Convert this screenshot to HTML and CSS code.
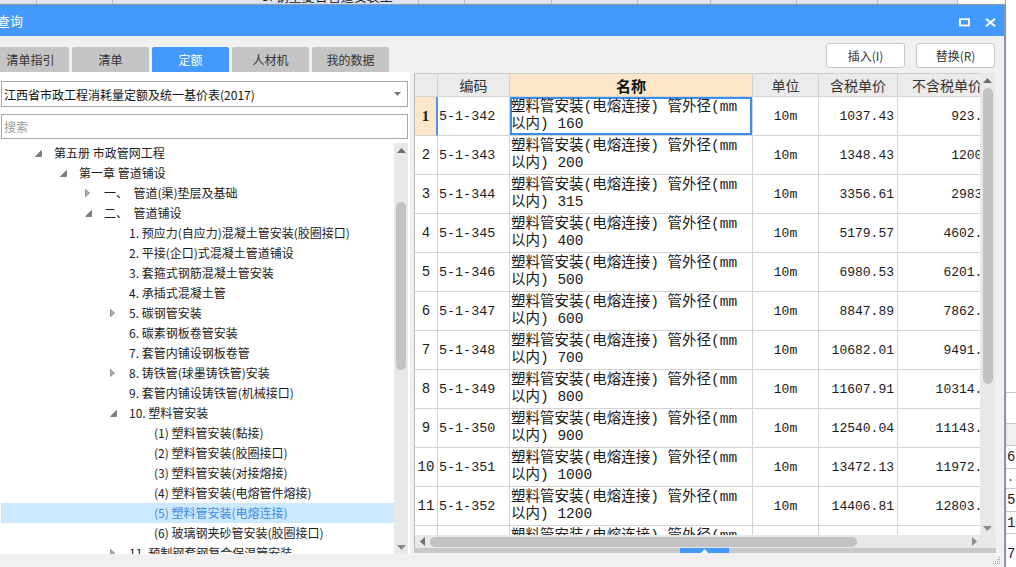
FILE: index.html
```html
<!DOCTYPE html>
<html lang="zh-CN">
<head>
<meta charset="utf-8">
<title>查询</title>
<link rel="stylesheet" href="styles.css">
</head>
<body>
<div class="screen">
  <div class="bg-top">
    <div class="bg-cell c1"></div>
    <div class="bg-cell c2"></div>
    <div class="bg-cell c3"><span class="bg-text">5. 钢塑复合管道安装工</span></div>
    <div class="bg-cell c4"></div>
    <div class="bg-cell c5"></div>
    <div class="bg-cell c6"></div>
    <div class="bg-cell c7"></div>
    <div class="bg-cell c8"></div>
    <div class="bg-cell c9"></div>
    <div class="bg-cell c10"></div>
  </div>

  <div class="bg-right">
    <div class="bgr-space"></div>
    <div class="bgr-row r1"></div>
    <div class="bgr-row r2 gray"></div>
    <div class="bgr-row r3">6</div>
    <div class="bgr-row r4">‥</div>
    <div class="bgr-row r3">5</div>
    <div class="bgr-row r5">1</div>
    <div class="bgr-row r6">7</div>
  </div>

  <div class="dialog">
    <div class="titlebar">
      <span class="title">查询</span>
      <div class="win-btns">
        <svg class="ico-max" width="11" height="9" viewBox="0 0 11 9"><rect x="1" y="1.2" width="9" height="6.3" fill="none" stroke="#fff" stroke-width="1.8"/></svg>
        <svg class="ico-close" width="11" height="9" viewBox="0 0 11 9"><path d="M1 0.8L10 8.2M10 0.8L1 8.2" stroke="#fff" stroke-width="2.1"/></svg>
      </div>
    </div>

    <div class="toolbar">
      <div class="tabs">
        <div class="tab">清单指引</div>
        <div class="tab">清单</div>
        <div class="tab active">定额</div>
        <div class="tab">人材机</div>
        <div class="tab">我的数据</div>
      </div>
      <div class="actions">
        <button class="btn">插入(I)</button>
        <button class="btn">替换(R)</button>
      </div>
    </div>

    <div class="main">
      <div class="left">
        <div class="select">
          <span>江西省市政工程消耗量定额及统一基价表(2017)</span>
          <svg class="sel-arrow" width="7" height="4" viewBox="0 0 7 4"><path d="M0 0H7L3.5 4Z" fill="#7a7a7a"/></svg>
        </div>
        <div class="search">搜索</div>
        <div class="tree-wrap">
          <div class="tree">
            <div class="tree-row l0"><span class="tog"><svg width="7" height="7" viewBox="0 0 7 7"><path d="M6.5 0.5V6.5H0.5Z" fill="#7c7c7c" stroke="#5a5a5a" stroke-width="0.6"/></svg></span>第五册 市政管网工程</div>
            <div class="tree-row l1"><span class="tog"><svg width="7" height="7" viewBox="0 0 7 7"><path d="M6.5 0.5V6.5H0.5Z" fill="#7c7c7c" stroke="#5a5a5a" stroke-width="0.6"/></svg></span>第一章 管道铺设</div>
            <div class="tree-row l2"><span class="tog"><svg width="5" height="8" viewBox="0 0 5 8"><path d="M0.5 0.5L4.5 4L0.5 7.5Z" fill="#b0b0b0" stroke="#808080" stroke-width="0.8"/></svg></span>一、  管道(渠)垫层及基础</div>
            <div class="tree-row l2"><span class="tog"><svg width="7" height="7" viewBox="0 0 7 7"><path d="M6.5 0.5V6.5H0.5Z" fill="#7c7c7c" stroke="#5a5a5a" stroke-width="0.6"/></svg></span>二、  管道铺设</div>
            <div class="tree-row l3"><span class="tog"></span>1. 预应力(自应力)混凝土管安装(胶圈接口)</div>
            <div class="tree-row l3"><span class="tog"></span>2. 平接(企口)式混凝土管道铺设</div>
            <div class="tree-row l3"><span class="tog"></span>3. 套箍式钢筋混凝土管安装</div>
            <div class="tree-row l3"><span class="tog"></span>4. 承插式混凝土管</div>
            <div class="tree-row l3"><span class="tog"><svg width="5" height="8" viewBox="0 0 5 8"><path d="M0.5 0.5L4.5 4L0.5 7.5Z" fill="#b0b0b0" stroke="#808080" stroke-width="0.8"/></svg></span>5. 碳钢管安装</div>
            <div class="tree-row l3"><span class="tog"></span>6. 碳素钢板卷管安装</div>
            <div class="tree-row l3"><span class="tog"></span>7. 套管内铺设钢板卷管</div>
            <div class="tree-row l3"><span class="tog"><svg width="5" height="8" viewBox="0 0 5 8"><path d="M0.5 0.5L4.5 4L0.5 7.5Z" fill="#b0b0b0" stroke="#808080" stroke-width="0.8"/></svg></span>8. 铸铁管(球墨铸铁管)安装</div>
            <div class="tree-row l3"><span class="tog"></span>9. 套管内铺设铸铁管(机械接口)</div>
            <div class="tree-row l3"><span class="tog"><svg width="7" height="7" viewBox="0 0 7 7"><path d="M6.5 0.5V6.5H0.5Z" fill="#7c7c7c" stroke="#5a5a5a" stroke-width="0.6"/></svg></span>10. 塑料管安装</div>
            <div class="tree-row l4"><span class="tog"></span>(1) 塑料管安装(黏接)</div>
            <div class="tree-row l4"><span class="tog"></span>(2) 塑料管安装(胶圈接口)</div>
            <div class="tree-row l4"><span class="tog"></span>(3) 塑料管安装(对接熔接)</div>
            <div class="tree-row l4"><span class="tog"></span>(4) 塑料管安装(电熔管件熔接)</div>
            <div class="tree-row l4 selected"><span class="tog"></span>(5) 塑料管安装(电熔连接)</div>
            <div class="tree-row l4"><span class="tog"></span>(6) 玻璃钢夹砂管安装(胶圈接口)</div>
            <div class="tree-row l3"><span class="tog"><svg width="5" height="8" viewBox="0 0 5 8"><path d="M0.5 0.5L4.5 4L0.5 7.5Z" fill="#b0b0b0" stroke="#808080" stroke-width="0.8"/></svg></span>11. 预制钢套钢复合保温管安装</div>
          </div>
          <div class="vscroll tree-vs">
            <div class="arrow-box"><svg width="9" height="5" viewBox="0 0 9 5"><path d="M0 5L4.5 0L9 5Z" fill="#6e6e6e"/></svg></div>
            <div class="thumb tree-thumb"></div>
            <div class="flex-space"></div>
            <div class="arrow-box"><svg width="9" height="5" viewBox="0 0 9 5"><path d="M0 0L4.5 5L9 0Z" fill="#8a8a8a"/></svg></div>
          </div>
        </div>
      </div>

      <div class="right">
        <div class="grid-body">
          <div class="grid-view">
            <div class="grow head">
              <div class="gc"></div>
              <div class="gc">编码</div>
              <div class="gc name-h">名称</div>
              <div class="gc">单位</div>
              <div class="gc">含税单价</div>
              <div class="gc">不含税单价</div>
            </div>
            <div class="grow">
              <div class="gc num cur">1</div>
              <div class="gc code">5-1-342</div>
              <div class="gc name sel"><span>塑料管安装(电熔连接) 管外径(mm</span><span>以内) 160</span></div>
              <div class="gc unit">10m</div>
              <div class="gc price">1037.43</div>
              <div class="gc price">923.35</div>
            </div>
            <div class="grow">
              <div class="gc num">2</div>
              <div class="gc code">5-1-343</div>
              <div class="gc name"><span>塑料管安装(电熔连接) 管外径(mm</span><span>以内) 200</span></div>
              <div class="gc unit">10m</div>
              <div class="gc price">1348.43</div>
              <div class="gc price">1200.1</div>
            </div>
            <div class="grow">
              <div class="gc num">3</div>
              <div class="gc code">5-1-344</div>
              <div class="gc name"><span>塑料管安装(电熔连接) 管外径(mm</span><span>以内) 315</span></div>
              <div class="gc unit">10m</div>
              <div class="gc price">3356.61</div>
              <div class="gc price">2983.3</div>
            </div>
            <div class="grow">
              <div class="gc num">4</div>
              <div class="gc code">5-1-345</div>
              <div class="gc name"><span>塑料管安装(电熔连接) 管外径(mm</span><span>以内) 400</span></div>
              <div class="gc unit">10m</div>
              <div class="gc price">5179.57</div>
              <div class="gc price">4602.57</div>
            </div>
            <div class="grow">
              <div class="gc num">5</div>
              <div class="gc code">5-1-346</div>
              <div class="gc name"><span>塑料管安装(电熔连接) 管外径(mm</span><span>以内) 500</span></div>
              <div class="gc unit">10m</div>
              <div class="gc price">6980.53</div>
              <div class="gc price">6201.96</div>
            </div>
            <div class="grow">
              <div class="gc num">6</div>
              <div class="gc code">5-1-347</div>
              <div class="gc name"><span>塑料管安装(电熔连接) 管外径(mm</span><span>以内) 600</span></div>
              <div class="gc unit">10m</div>
              <div class="gc price">8847.89</div>
              <div class="gc price">7862.15</div>
            </div>
            <div class="grow">
              <div class="gc num">7</div>
              <div class="gc code">5-1-348</div>
              <div class="gc name"><span>塑料管安装(电熔连接) 管外径(mm</span><span>以内) 700</span></div>
              <div class="gc unit">10m</div>
              <div class="gc price">10682.01</div>
              <div class="gc price">9491.38</div>
            </div>
            <div class="grow">
              <div class="gc num">8</div>
              <div class="gc code">5-1-349</div>
              <div class="gc name"><span>塑料管安装(电熔连接) 管外径(mm</span><span>以内) 800</span></div>
              <div class="gc unit">10m</div>
              <div class="gc price">11607.91</div>
              <div class="gc price">10314.22</div>
            </div>
            <div class="grow">
              <div class="gc num">9</div>
              <div class="gc code">5-1-350</div>
              <div class="gc name"><span>塑料管安装(电熔连接) 管外径(mm</span><span>以内) 900</span></div>
              <div class="gc unit">10m</div>
              <div class="gc price">12540.04</div>
              <div class="gc price">11143.07</div>
            </div>
            <div class="grow">
              <div class="gc num">10</div>
              <div class="gc code">5-1-351</div>
              <div class="gc name"><span>塑料管安装(电熔连接) 管外径(mm</span><span>以内) 1000</span></div>
              <div class="gc unit">10m</div>
              <div class="gc price">13472.13</div>
              <div class="gc price">11972.48</div>
            </div>
            <div class="grow">
              <div class="gc num">11</div>
              <div class="gc code">5-1-352</div>
              <div class="gc name"><span>塑料管安装(电熔连接) 管外径(mm</span><span>以内) 1200</span></div>
              <div class="gc unit">10m</div>
              <div class="gc price">14406.81</div>
              <div class="gc price">12803.66</div>
            </div>
            <div class="grow">
              <div class="gc num">12</div>
              <div class="gc code">5-1-353</div>
              <div class="gc name"><span>塑料管安装(电熔连接) 管外径(mm</span><span>以内) 1400</span></div>
              <div class="gc unit">10m</div>
              <div class="gc price">15338.92</div>
              <div class="gc price">13632.51</div>
            </div>
          </div>
          <div class="vscroll grid-vs">
            <div class="arrow-box"><svg width="9" height="5" viewBox="0 0 9 5"><path d="M0 5L4.5 0L9 5Z" fill="#6e6e6e"/></svg></div>
            <div class="thumb grid-thumb"></div>
            <div class="flex-space"></div>
            <div class="arrow-box"><svg width="9" height="5" viewBox="0 0 9 5"><path d="M0 0L4.5 5L9 0Z" fill="#8a8a8a"/></svg></div>
          </div>
        </div>
        <div class="hscroll">
          <div class="h-arrow"><svg width="5" height="9" viewBox="0 0 5 9"><path d="M5 0L0 4.5L5 9Z" fill="#6e6e6e"/></svg></div>
          <div class="thumb h-thumb"></div>
          <div class="flex-space"></div>
          <div class="h-arrow"><svg width="5" height="9" viewBox="0 0 5 9"><path d="M0 0L5 4.5L0 9Z" fill="#8a8a8a"/></svg></div>
          <div class="corner"></div>
        </div>
        <div class="splitter">
          <div class="split-tab"><svg width="7" height="4" viewBox="0 0 7 4"><path d="M0 4L3.5 0L7 4Z" fill="#fff"/></svg></div>
        </div>
      </div>
    </div>
  </div>

  <svg class="grip" width="8" height="8" viewBox="0 0 8 8">
    <rect x="6" y="0" width="1" height="1" fill="#a0a0a0"/>
    <rect x="4" y="2" width="1" height="1" fill="#a0a0a0"/>
    <rect x="6" y="2" width="1" height="1" fill="#a0a0a0"/>
    <rect x="2" y="4" width="1" height="1" fill="#a0a0a0"/>
    <rect x="4" y="4" width="1" height="1" fill="#a0a0a0"/>
    <rect x="6" y="4" width="1" height="1" fill="#a0a0a0"/>
    <rect x="0" y="6" width="1" height="1" fill="#a0a0a0"/>
    <rect x="2" y="6" width="1" height="1" fill="#a0a0a0"/>
    <rect x="4" y="6" width="1" height="1" fill="#a0a0a0"/>
    <rect x="6" y="6" width="1" height="1" fill="#a0a0a0"/>
  </svg>
</div>
</body>
</html>
```

FILE: styles.css
```css
* { box-sizing: border-box; }
html, body { margin: 0; padding: 0; }
body {
  width: 1016px;
  height: 567px;
  overflow: hidden;
  background: #fff;
  font-family: "Noto Sans CJK SC", "Microsoft YaHei", sans-serif;
  font-size: 12px;
  color: #1e1e1e;
}
.screen {
  position: relative;
  width: 1016px;
  height: 567px;
  overflow: hidden;
  background: #fff;
}

/* background application */
.bg-top {
  display: flex;
  height: 5px;
  overflow: hidden;
  background: #fff;
}
.bg-cell {
  height: 5px;
  background: #dfe7f5;
  border-right: 1px solid #b7bfcb;
  overflow: hidden;
  position: relative;
}
.c1 { width: 37px; }
.c2 { width: 76px; }
.c3 { width: 306px; }
.c4 { width: 46px; }
.c5 { width: 87px; }
.c6 { width: 86px; }
.c7 { width: 73px; }
.c8 { width: 86px; }
.c9 { width: 81px; }
.c10 { width: 80px; }
.bg-text {
  display: block;
  padding-left: 149px;
  margin-top: -11px;
  font-size: 13px;
  line-height: 13px;
  color: #222;
  white-space: nowrap;
}
.bg-right {
  position: absolute;
  left: 1005px;
  top: 0;
  width: 11px;
  height: 567px;
  display: flex;
  flex-direction: column;
  background: #fff;
  border-left: 1px solid #9aa3ad;
}
.bgr-space { height: 392px; flex: none; }
.bgr-row {
  flex: none;
  border-top: 1px solid #c9c9c9;
  font-family: "Liberation Mono", monospace;
  font-size: 14px;
  color: #222;
  padding-left: 1px;
  display: flex;
  align-items: center;
}
.bgr-row.gray { background: #f0f0f0; }
.r1 { height: 31px; }
.r2 { height: 22px; }
.r3 { height: 23px; }
.r4 { height: 20px; }
.r5 { height: 22px; }
.r6 { height: 40px; }

/* dialog window */
.dialog {
  position: absolute;
  left: -9px;
  top: 4px;
  width: 1014px;
  height: 580px;
  border: 1px solid #8e9aaa;
  background: #f0f0f0;
  display: flex;
  flex-direction: column;
  box-shadow: 1px 0 2px rgba(0,0,0,0.15);
}
.titlebar {
  height: 31px;
  flex: none;
  background: #4499ff;
  color: #fff;
  display: flex;
  align-items: center;
  justify-content: space-between;
  padding-left: 5px;
  padding-right: 8px;
}
.title { font-size: 13px; line-height: 31px; }
.win-btns { display: flex; align-items: center; gap: 15px; margin-top: 3px; }
.win-btns svg { display: block; }

.toolbar {
  height: 36px;
  flex: none;
  display: flex;
  justify-content: space-between;
}
.tabs {
  display: flex;
  gap: 3px;
  align-self: flex-end;
}
.tab {
  width: 77px;
  height: 25px;
  background: #c4c4c4;
  color: #333;
  font-size: 12px;
  line-height: 25px;
  text-align: center;
  border-radius: 2px 2px 0 0;
}
.tab.active { background: #4499ff; color: #fff; }
.actions {
  display: flex;
  gap: 11px;
  padding-top: 7px;
  padding-right: 9px;
}
.btn {
  width: 79px;
  height: 25px;
  background: #fff;
  border: 1px solid #c8c8c8;
  border-radius: 3px;
  font-family: "Noto Sans CJK SC", sans-serif;
  font-size: 12px;
  color: #333;
  padding: 0;
}

.main {
  flex: 1;
  display: flex;
  align-items: flex-start;
}
.left {
  width: 418px;
  height: 482px;
  flex: none;
  background: #fff;
  padding: 9px 2px 0 9px;
  display: flex;
  flex-direction: column;
}
.select {
  height: 26px;
  flex: none;
  border: 1px solid #a7a7a7;
  display: flex;
  align-items: center;
  justify-content: space-between;
  padding: 0 6px 0 2px;
  color: #111;
  white-space: nowrap;
}
.sel-arrow { display: block; }
.search {
  height: 25px;
  flex: none;
  margin-top: 7px;
  border: 1px solid #a7a7a7;
  padding-left: 2px;
  line-height: 23px;
  color: #9a9a9a;
}
.tree-wrap {
  margin-top: 4px;
  height: 411px;
  flex: none;
  display: flex;
  overflow: hidden;
}
.tree {
  flex: 1;
  overflow: hidden;
}
.tree-row {
  height: 20px;
  display: flex;
  align-items: center;
  white-space: pre;
  color: #1c1c1c;
  line-height: 20px;
}
.tree-row.selected { background: #cce8ff; color: #3a8ce4; }
.l0 { padding-left: 34px; }
.l1 { padding-left: 59px; }
.l2 { padding-left: 84px; }
.l3 { padding-left: 109px; }
.l4 { padding-left: 134px; }
.tog {
  width: 19px;
  flex: none;
  display: flex;
  align-items: center;
}
.tog svg { display: block; }

.vscroll {
  width: 14px;
  flex: none;
  background: #e8e8e8;
  display: flex;
  flex-direction: column;
  align-items: center;
}
.arrow-box {
  height: 14px;
  flex: none;
  display: flex;
  align-items: center;
  justify-content: center;
}
.arrow-box svg { display: block; }
.thumb { background: #c2c2c2; border-radius: 5px; flex: none; }
.tree-thumb { width: 10px; height: 168px; margin-top: 45px; }
.flex-space { flex: 1; }

.right {
  width: 582px;
  flex: none;
  margin-left: 4px;
  margin-top: 1px;
  display: flex;
  flex-direction: column;
}
.grid-body {
  height: 462px;
  display: flex;
}
.grid-view {
  width: 566px;
  flex: none;
  overflow: hidden;
  border-left: 1px solid #b9b9b9;
  border-top: 1px solid #cfcfcf;
  background: #fff;
}
.grid-vs { width: 15px; }
.grid-thumb { width: 10px; height: 296px; margin-top: 1px; }

.grow {
  display: grid;
  grid-template-columns: 23px 72px 243px 66px 79px 104px;
  height: 39px;
  width: 587px;
}
.grow.head { height: 23px; }
.gc {
  border-right: 1px solid #d3d3d3;
  border-bottom: 1px solid #d3d3d3;
  overflow: hidden;
  white-space: nowrap;
  display: flex;
  align-items: center;
  font-family: "Liberation Mono", "Noto Sans CJK SC", monospace;
  font-size: 13px;
  color: #1a1a1a;
}
.head .gc {
  background: #ebebeb;
  justify-content: center;
  font-family: "Noto Sans CJK SC", sans-serif;
  font-size: 14px;
  color: #333;
}
.head .gc:last-child { justify-content: flex-start; padding-left: 14px; }
.head .gc.name-h {
  background: #fde5c7;
  font-weight: bold;
  font-size: 15px;
  color: #111;
}
.gc.num {
  justify-content: center;
  font-size: 14px;
}
.gc.num.cur {
  background: #fde5c7;
  font-family: "Liberation Serif", serif;
  font-weight: bold;
  font-size: 15px;
  border-right: 2px solid #4a96ea;
}
.gc.code { padding-left: 1px; font-size: 13.4px; }
.gc.name {
  flex-direction: column;
  align-items: flex-start;
  justify-content: center;
  padding-left: 1px;
  font-size: 14.5px;
  line-height: 17px;
}
.gc.name.sel { box-shadow: inset 0 0 0 2px #3b8fe8; }
.gc.unit { justify-content: center; }
.gc.price { justify-content: flex-end; padding-right: 3px; }

.hscroll {
  height: 13px;
  display: flex;
  align-items: center;
  background: #e8e8e8;
  border-left: 1px solid #b9b9b9;
}
.h-arrow {
  width: 14px;
  height: 13px;
  flex: none;
  display: flex;
  align-items: center;
  justify-content: center;
}
.h-arrow svg { display: block; }
.h-thumb { width: 427px; height: 10px; margin-left: 1px; }
.corner { width: 15px; height: 13px; flex: none; background: #e8e8e8; }
.splitter {
  height: 5px;
  background: #c8c8c8;
  position: relative;
}
.split-tab {
  position: absolute;
  left: 266px;
  top: 0;
  width: 49px;
  height: 5px;
  background: #4499ff;
  display: flex;
  justify-content: center;
  align-items: flex-end;
}
.split-tab svg { display: block; }

.grip {
  position: absolute;
  left: 993px;
  top: 557px;
}
```
